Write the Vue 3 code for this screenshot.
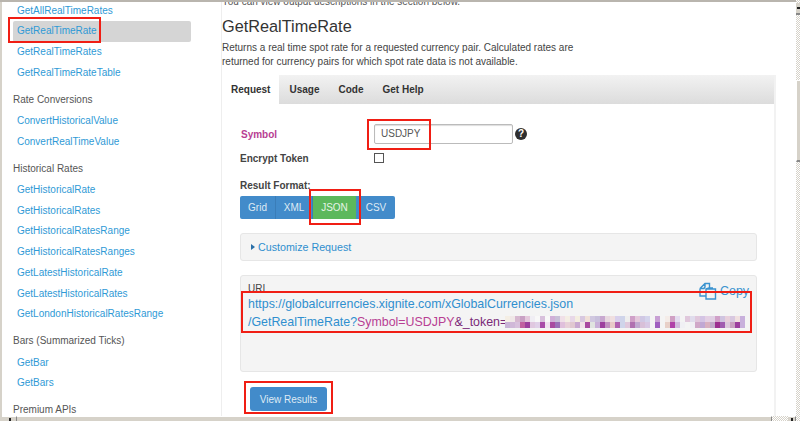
<script setup>
const groups = [
  { title: null, items: ['GetAllRealTimeRates', 'GetRealTimeRate', 'GetRealTimeRates', 'GetRealTimeRateTable'] },
  { title: 'Rate Conversions', items: ['ConvertHistoricalValue', 'ConvertRealTimeValue'] },
  { title: 'Historical Rates', items: ['GetHistoricalRate', 'GetHistoricalRates', 'GetHistoricalRatesRange', 'GetHistoricalRatesRanges', 'GetLatestHistoricalRate', 'GetLatestHistoricalRates', 'GetLondonHistoricalRatesRange'] },
  { title: 'Bars (Summarized Ticks)', items: ['GetBar', 'GetBars'] },
  { title: 'Premium APIs', items: [] }
]
const tabs = ['Request', 'Usage', 'Code', 'Get Help']
const formats = ['Grid', 'XML', 'JSON', 'CSV']
const top = 'f4eee4 f0e8e8 d6b8d0 c9a0c4 e4c8dc f0eef4 f8f8f8 d8c0dc f8f8f8 d0b0d8 c8c0d8 f0e0e8 f4eee4 e8d8e8 f4eee0 d8c8e0 f0e0d8 d0c8e0 c8c0dc c8a8d0 e8d8e0 f0dfe0 d8d0ec cfd4ea eeeeee d0a0c8 e4c8dc d0c8e4 d4d4ec f4f4f4 c8a0d4 f4f4f4 f4ece8 d0a0c4 e4dcf0 f4f4f4 e0c8dc e0dcec e0c8dc d4c4e4 e4d0e4 e0d0e4 d0a0c8 d0c4e0 e8d0dc d8c8e0 f0e0e0 c8b0dc'.split(' ')
const bot = 'c9b3d6 d0b8d8 d8c0dc c060a0 9c3f9e e0c8e0 e0d0e8 a84aa8 f0e0f0 a84aa0 9a70b8 e0c0dc e8d0d8 e0c8d0 c8a8d0 f0e0e8 a848a0 e0e4e0 c8b0d8 9c3f9e c090c0 e8c8c8 b060b0 cfd4ea e0c8dc b070b0 c0a8d0 d8c0d8 d8c8e4 f4f4f4 a060c0 f4f4f4 e8d0c8 b040a8 d0b8dc f0f0f4 f4f4f4 f0f0f4 d0a8c8 c0a8d4 d8b0c0 c0a8c8 9c2f90 a05cb0 dcc8dc c8a0c0 9c3f9e c8b0dc'.split(' ')
const blur = [...top, ...bot].map((v) => '#' + v)
const rects = [
  { x: 8, y: 17, w: 93, h: 26 },
  { x: 367, y: 119, w: 64, h: 31 },
  { x: 309, y: 189, w: 52, h: 36 },
  { x: 241, y: 291, w: 511, h: 42 },
  { x: 244, y: 381, w: 89, h: 33 }
]
</script>

<template>
  <div class="window">
    <div class="viewport">
      <aside class="side">
        <section v-for="(g, i) in groups" :key="i" class="group">
          <h4 v-if="g.title" class="group-title">{{ g.title }}</h4>
          <a v-for="it in g.items" :key="it" class="nav" :class="{ active: it === 'GetRealTimeRate' }">{{ it }}</a>
        </section>
      </aside>
      <main class="main">
        <p class="cut">You can view output descriptions in the section below.</p>
        <h1 class="title">GetRealTimeRate</h1>
        <p class="desc">Returns a real time spot rate for a requested currency pair. Calculated rates are<br>returned for currency pairs for which spot rate data is not available.</p>
        <div class="panel">
          <div class="tabs">
            <span v-for="(t, i) in tabs" :key="t" class="tab" :class="{ on: i === 0 }">{{ t }}</span>
          </div>
          <div class="body">
            <div class="row sym">
              <label class="symbol">Symbol</label>
              <span class="input">USDJPY</span>
              <span class="help">?</span>
            </div>
            <div class="row enc">
              <label class="lab">Encrypt Token</label>
              <span class="check"></span>
            </div>
            <div class="lab fmt">Result Format:</div>
            <div class="btns">
              <span v-for="f in formats" :key="f" class="btn" :class="{ green: f === 'JSON' }">{{ f }}</span>
            </div>
            <div class="well custom"><span class="tri"></span>Customize Request</div>
            <div class="well uri">
              <div class="uri-label">URI</div>
              <a class="copy">
                <svg width="18" height="18" viewBox="0 0 18 18" fill="none" stroke="#3a93cf" stroke-width="1.4">
                  <path d="M1 6.5 L6 1.5 H10.5 V6 M1 6.5 V14 H7 M1 6.5 H5 L6 5 V1.5"/>
                  <path d="M7 7 H16.5 V17 H7 Z M7 7 L10 6 H14"/>
                </svg>
                Copy
              </a>
              <div class="url">
                <div>https://globalcurrencies.xignite.com/xGlobalCurrencies.json</div>
                <div class="line2">/GetRealTimeRate?<span class="p1">Symbol=USDJPY</span><span class="p2">&amp;_token=</span><span class="pixels"><i v-for="(c, i) in blur" :key="i" :style="{ background: c }"></i></span></div>
              </div>
            </div>
            <button class="view">View Results</button>
          </div>
        </div>
      </main>
    </div>
    <div class="vbar">
      <span class="vcap"><b class="up"></b></span>
      <span class="thumb"></span>
    </div>
    <div class="hbar">
      <span class="hcap"><b class="left"></b></span>
      <span class="hthumb"></span>
      <span class="hcap end"><b class="right"></b></span>
    </div>
    <span v-for="(r, i) in rects" :key="i" class="mark" :style="{ left: r.x + 'px', top: r.y + 'px', width: r.w + 'px', height: r.h + 'px' }"></span>
  </div>
</template>

<style>
html, body { margin: 0; padding: 0; background: #fff; }
</style>

<style scoped>
.window {
  width: 800px;
  height: 421px;
  overflow: hidden;
  background: #fff;
  box-sizing: border-box;
  font-family: "Liberation Sans", Arial, sans-serif;
  color: #333;
  display: grid;
  grid-template-columns: 2px 1fr 5px;
  grid-template-rows: 2px 1fr 5px;
  background-image: linear-gradient(#b9b5ae, #b9b5ae), linear-gradient(#d6d2c9, #d6d2c9);
  background-size: 100% 2px, 2px 100%;
  background-repeat: no-repeat;
  position: relative;
}
.viewport { grid-row: 2; grid-column: 2; display: flex; min-height: 0; overflow: hidden; }
.side { width: 219px; flex: none; border-right: 1px solid #eee; margin-top: -1.35px; }
.group { display: flex; flex-direction: column; }
.group-title { margin: 0; padding: 9.25px 0 4.4px 11px; font-size: 10px; line-height: 14px; font-weight: 400; color: #555; }
.nav { display: block; width: 178px; margin-left: 11px; box-sizing: border-box; height: 20.7px; line-height: 20.7px; padding-left: 4px; font-size: 10px; color: #2f9ad6; border-radius: 2px; flex: none; }
.nav.active { background: #d5d5d5; }
.main { flex: none; width: 573px; }
.cut { margin: -7px 0 0; font-size: 10px; line-height: 14px; color: #555; }
.title { margin: 7px 0 0; font-size: 16.3px; line-height: 20px; font-weight: 400; color: #333; }
.desc { margin: 5px 0 0; font-size: 10px; line-height: 14px; color: #444; }
.panel { margin: 6px 0 0 -1px; width: 552px; border-right: 2px solid #f2f2f2; border-left: 1px solid #eee; }
.tabs { display: flex; height: 29px; background: linear-gradient(#f2f2f2, #dcdcdc); }
.tab { font-size: 10px; font-weight: 700; line-height: 29px; padding: 0 9px; margin-right: 1px; color: #333; }
.tab.on { background: #fff; }
.body { padding: 0 0 0 18px; height: 400px; }
.row { display: flex; align-items: center; }
.sym { padding-top: 20px; height: 20px; }
.symbol { width: 134px; font-size: 10px; font-weight: 700; color: #b83e93; padding-left: 1px; box-sizing: border-box; }
.input { width: 139px; height: 20px; box-sizing: border-box; border: 1px solid #bbb; border-radius: 2px; box-shadow: inset 0 1px 1px #ddd; font-size: 10px; line-height: 18px; padding-left: 6px; color: #555; }
.help { width: 12px; height: 12px; margin-left: 2px; border-radius: 50%; background: #2f2f2f; color: #fff; font-size: 10px; font-weight: 700; line-height: 12px; text-align: center; }
.enc { margin-top: 6px; height: 16px; }
.lab { font-size: 10px; font-weight: 700; color: #444; }
.enc .lab { width: 134px; }
.check { width: 8px; height: 8px; border: 1px solid #555; background: #fff; }
.fmt { margin-top: 13px; line-height: 14px; }
.btns { display: flex; margin-top: 3px; height: 23px; width: 155px; border-radius: 2px; overflow: hidden; }
.btn { flex: none; background: #428bca; color: #dfeaf4; font-size: 10px; line-height: 23px; text-align: center; border-right: 1px solid #3a7db8; box-sizing: border-box; }
.btn:nth-child(1) { width: 36px; }
.btn:nth-child(2) { width: 37px; }
.btn:nth-child(3) { width: 44px; }
.btn:nth-child(4) { width: 38px; border-right: 0; }
.btn.green { background: #5cb85c; color: #e6f4e6; border-right-color: #428bca; }
.well { box-sizing: border-box; background: #f4f4f4; border: 1px solid #e6e6e6; border-radius: 3px; width: 517px; }
.custom { margin-top: 14px; height: 28px; font-size: 10.7px; color: #2f8fcf; padding-left: 10px; display: flex; align-items: center; }
.tri { width: 0; height: 0; border-left: 4px solid #2a6fa8; border-top: 3px solid transparent; border-bottom: 3px solid transparent; margin-right: 3px; }
.uri { position: relative; margin-top: 14px; height: 97px; padding: 6px 7px; }
.uri-label { font-size: 10px; line-height: 14px; color: #444; }
.copy { position: absolute; right: 7px; top: 6px; display: flex; align-items: center; gap: 3px; font-size: 12.4px; color: #3a93cf; }
.url { font-size: 12.4px; line-height: 18px; color: #2f8fcf; margin-top: -1px; }
.line2 { display: flex; align-items: center; white-space: pre; }
.p1 { color: #b83e93; }
.p2 { color: #7a2a78; }
.pixels { display: grid; grid-template-columns: repeat(48, 5px); grid-auto-rows: 6px; width: 240px; margin-left: -2px; }
.pixels i { display: block; }
.view { display: block; margin: 15px 0 0 10px; width: 77px; height: 24px; padding: 0; border: 0; border-radius: 3px; background: #428bca; color: #dfeaf4; font-family: inherit; font-size: 10px; }
.vbar { grid-row: 1 / 4; grid-column: 3; background: repeating-conic-gradient(#d6d2c9 0 25%, #fff 0 50%) 0 0 / 2px 2px; display: flex; flex-direction: column; padding-top: 3px; box-sizing: border-box; }
.vcap { height: 12px; background: #d6d2c9; border-bottom: 2px solid #888; box-sizing: border-box; position: relative; }
.up { position: absolute; left: 1px; top: 4px; width: 3px; height: 2px; background: #222; }
.thumb { margin-top: 65px; height: 82px; background: #d6d2c9; border-top: 1px solid #fff; border-left: 1px solid #fff; border-bottom: 2px solid #888; box-sizing: border-box; }
.hbar { grid-row: 3; grid-column: 2; display: flex; background: repeating-conic-gradient(#d6d2c9 0 25%, #fff 0 50%) 0 0 / 2px 2px; }
.hcap { width: 15px; background: #d6d2c9; border-right: 1px solid #888; border-top: 1px solid #fff; box-sizing: border-box; position: relative; }
.hcap.end { margin-left: 16px; width: 8px; }
.left, .right { position: absolute; left: 7px; top: 1px; width: 2px; height: 3px; background: #222; }
.right { left: 3px; }
.hthumb { width: 755px; background: #d6d2c9; border-top: 1px solid #fff; border-right: 1px solid #888; box-sizing: border-box; }
.mark { position: absolute; box-sizing: border-box; border: 2px solid #f01e14; pointer-events: none; }
</style>
